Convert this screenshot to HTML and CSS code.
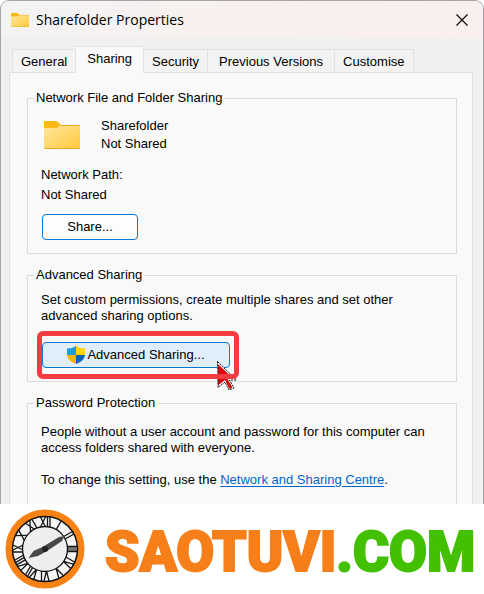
FILE: index.html
```
<!DOCTYPE html>
<html lang="en">
<head>
    <meta charset="UTF-8">
    <meta name="viewport" content="width=device-width, initial-scale=1.0">
    <title>Sharefolder Properties</title>
    <link rel="stylesheet" href="styles.css">
</head>
<body>
    <svg class="defs" width="0" height="0" aria-hidden="true">
        <defs>
            <linearGradient id="folderFill" x1="0" y1="0" x2="1" y2="1">
                <stop offset="0" stop-color="#ffe8a0"/>
                <stop offset="1" stop-color="#ffc83c"/>
            </linearGradient>
            <symbol id="folder" viewBox="0 0 36 28">
                <path d="M1 0h10.500q1.500 0 2.500 1l3 3v5H0V1q0-1 1-1z" fill="#fbb917"/>
                <path d="M1 7h11q1 0 2-1l1.500-1.500q.5-.5 1.500-.5h18q1 0 1 1v22q0 1-1 1H1q-1 0-1-1V8q0-1 1-1z" fill="url(#folderFill)"/>
                <path d="M16 4.500h19.500M0.500 27.500h35" stroke="#e6a822" fill="none"/>
            </symbol>
        </defs>
    </svg>

    <main class="window">
        <header class="titlebar">
            <svg class="title-icon" aria-hidden="true"><use href="#folder"/></svg>
            <h1>Sharefolder Properties</h1>
            <button class="close" aria-label="Close">
                <svg width="12" height="12" viewBox="0 0 12 12"><path d="M.5.5l11 11M11.500.5l-11 11" stroke="#111" stroke-width="1.300"/></svg>
            </button>
        </header>

        <div class="tabs" role="tablist">
            <button class="tab" role="tab">General</button>
            <button class="tab active" role="tab" aria-selected="true">Sharing</button>
            <button class="tab" role="tab">Security</button>
            <button class="tab wide" role="tab">Previous Versions</button>
            <button class="tab" role="tab">Customise</button>
        </div>

        <div class="panel" role="tabpanel">
            <fieldset class="group">
                <legend>Network File and Folder Sharing</legend>
                <div class="share-item">
                    <svg class="folder-icon" aria-hidden="true"><use href="#folder"/></svg>
                    <div class="share-name">
                        <p>Sharefolder</p>
                        <p>Not Shared</p>
                    </div>
                </div>
                <div class="network-path">
                    <p>Network Path:</p>
                    <p>Not Shared</p>
                </div>
                <button class="btn share-btn">Share...</button>
            </fieldset>

            <fieldset class="group">
                <legend>Advanced Sharing</legend>
                <p>Set custom permissions, create multiple shares and set other advanced sharing options.</p>
                <div class="highlight">
                    <button class="btn advanced-btn">
                        <svg width="18" height="18" viewBox="0 0 18 18" aria-hidden="true">
                            <path d="M9 0Q5.500 2.500 0 2.500V9h9z" fill="#1b9de2"/>
                            <path d="M9 0q3.500 2.500 9 2.500V9H9z" fill="#ffd400"/>
                            <path d="M0 9q.5 6 9 9V9z" fill="#f6b400"/>
                            <path d="M18 9q-.5 6-9 9V9z" fill="#0a63b4"/>
                        </svg>
                        Advanced Sharing...
                    </button>
                    <svg class="cursor" width="22" height="30" viewBox="0 0 22 30" aria-hidden="true">
                        <path d="M.5.5l19 18.500h-7l4.500 8-5 2-4-8-7 5.500z" fill="#fff"/>
                        <path d="M1 3l15.500 15H10.500l5 8.500-3 1.500-4.500-9-7 5.500z" fill="#d60a0e"/>
                        <path d="M.5.5l19 18.500h-7l4.500 8-5 2-4-8-7 5.500z" fill="none" stroke="#111" stroke-dasharray="2 1"/>
                    </svg>
                </div>
            </fieldset>

            <fieldset class="group last">
                <legend>Password Protection</legend>
                <p>People without a user account and password for this computer can access folders shared with everyone.</p>
                <p class="setting">To change this setting, use the <a href="#">Network and Sharing Centre</a>.</p>
            </fieldset>
        </div>
    </main>

    <footer class="brand">
        <svg class="clock" viewBox="0 0 80 80" aria-hidden="true">
            <circle cx="40" cy="40" r="36" fill="#eee" stroke="#f98214" stroke-width="7"/>
            <circle cx="40" cy="40" r="32.500" fill="#f6f6f6" stroke="#111" stroke-width="1.500"/>
            <!-- hour marks, each drawn at the top and turned into place -->
            <g stroke="#151515" stroke-width="1.300" fill="none">
                <path d="M35.500 8l5 10M40.500 8l-5 10M42.500 8v10M45 8v10"/>
                <path d="M40 8v10" transform="rotate(30 40 40)"/>
                <path d="M38.500 8v10M41.500 8v10" transform="rotate(60 40 40)"/>
                <path d="M40 8v10" stroke="#777" stroke-width="5" transform="rotate(90 40 40)"/>
                <path d="M37.500 7.500v10M42.500 7.500v10" transform="rotate(90 40 40)"/>
                <path d="M36.500 8v10M39 8l2.500 10L44 8" transform="rotate(120 40 40)"/>
                <path d="M37.500 8L40 18l2.500-10" transform="rotate(150 40 40)"/>
                <path d="M36 8l2.500 10L41 8M43.500 8v10" transform="rotate(180 40 40)"/>
                <path d="M34.500 8L37 18l2.500-10M41.500 8v10M44 8v10" transform="rotate(210 40 40)"/>
                <path d="M33.500 8L36 18l2.500-10M40.500 8v10M43 8v10M45.500 8v10" transform="rotate(240 40 40)"/>
                <path d="M37 8v10M39 8l5 10M44 8l-5 10" transform="rotate(270 40 40)"/>
                <path d="M37 8l6 10M43 8l-6 10" transform="rotate(300 40 40)"/>
                <path d="M36 8l5 10M41 8l-5 10M43.500 8v10" transform="rotate(330 40 40)"/>
            </g>
            <circle cx="40" cy="40" r="22.500" fill="#eee" stroke="#111" stroke-width="1.300"/>
            <path d="M23.500 49l5-7 9-4L54 28l5.500-1-2.500 5-15 10-9 5z" fill="#484848"/>
            <circle cx="40" cy="40" r="3" fill="#222"/>
        </svg>
        <p class="brand-name">SAOTUVI<span>.COM</span></p>
    </footer>
</body>
</html>
```
FILE: styles.css
```
* {
    margin: 0;
    padding: 0;
    box-sizing: border-box;
}

body {
    font-family: 'Liberation Sans', Arial, sans-serif;
    font-size: 13px;
    line-height: 16px;
    color: #000;
    background: #fff;
}

button {
    font: inherit;
    color: inherit;
}

.defs {
    position: absolute;
}

.window {
    background: #f0f0f0;
    border: 1px solid #a5a5a5;
    border-bottom: none;
    border-radius: 9px 9px 0 0;
    overflow: hidden;
}

.titlebar {
    display: flex;
    align-items: center;
    gap: 7px;
    height: 37px;
    padding: 0 15px 0 10px;
    background: linear-gradient(90deg, #f3f3f3 0%, #f7f1f0 35%, #f9efee 100%);
}

.title-icon {
    width: 18px;
    height: 14px;
}

.titlebar h1 {
    flex: 1;
    font-family: 'Open Sans', 'Segoe UI', sans-serif;
    font-size: 14px;
    font-weight: normal;
}

.close {
    display: flex;
    border: none;
    background: none;
}

.tabs {
    display: flex;
    align-items: flex-end;
    padding: 8px 11px 0;
}

.tab {
    height: 23px;
    padding: 2px 8px 0;
    border: 1px solid #e2e2e2;
    border-bottom: none;
    border-left: none;
    background: #f3f3f3;
    white-space: nowrap;
}

.tab:first-child {
    border-left: 1px solid #e2e2e2;
}

.tab.wide {
    padding: 2px 11px 0;
}

.tab.active {
    position: relative;
    height: 27px;
    margin-bottom: -1px;
    padding: 0 11px 2px;
    background: #f9f9f9;
}

.panel {
    display: flex;
    flex-direction: column;
    gap: 13px;
    margin: 0 10px 0 8px;
    padding: 17px 15px 0 17px;
    border: 1px solid #e2e2e2;
    border-bottom: none;
    background: #f9f9f9;
}

.group {
    min-width: 0;
    padding: 9px 14px 13px 13px;
    border: 1px solid #dcdcdc;
}

.group legend {
    margin-left: -7px;
    padding: 0 2px;
}

.share-item {
    display: flex;
    align-items: center;
    gap: 21px;
    padding: 2px 0 0 3px;
}

.folder-icon {
    width: 36px;
    height: 28px;
}

.share-name {
    line-height: 18px;
}

.network-path {
    margin: 12px 0 9px;
    line-height: 20px;
}

.btn {
    display: flex;
    align-items: center;
    justify-content: center;
    height: 26px;
    border: 1px solid #0078d4;
    border-radius: 4px;
    background: #fdfdfd;
}

.share-btn {
    width: 96px;
    margin-left: 1px;
}

.advanced-btn {
    gap: 2px;
    width: 188px;
    background: #e0eef9;
}

.highlight {
    position: relative;
    width: fit-content;
    margin: 18px 0 0 1px;
}

.highlight::after {
    content: '';
    position: absolute;
    inset: -11px -9px -11px -5px;
    border: 5px solid #f43b3f;
    border-radius: 6px;
    pointer-events: none;
}

.cursor {
    position: absolute;
    top: 19px;
    left: 175px;
}

.last {
    padding-top: 13px;
    padding-bottom: 16px;
    border-bottom: none;
}

.setting {
    margin-top: 16px;
}

a {
    color: #0066cc;
    text-underline-offset: 2px;
}

.brand {
    display: flex;
    align-items: center;
    gap: 20px;
    height: 90px;
    padding: 0 5px;
}

.clock {
    flex: none;
    width: 80px;
    height: 80px;
}

.brand-name {
    padding-top: 5px;
    font-family: Roboto, sans-serif;
    font-size: 55px;
    font-weight: 900;
    line-height: 64px;
    color: #f77f19;
    -webkit-text-stroke: 2px currentColor;
}

.brand-name span {
    color: #43c000;
    -webkit-text-stroke-color: #43c000;
}
```
